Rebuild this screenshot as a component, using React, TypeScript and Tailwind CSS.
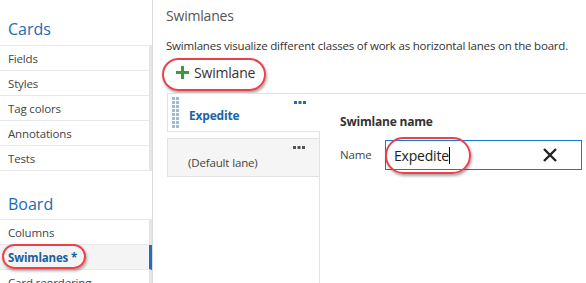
import React from "react";

const font = { fontFamily: '"Open Sans", "Noto Sans", sans-serif' };

function Row({ label, selected }: { label: string; selected?: boolean }) {
  return (
    <div
      className={
        "h-[25px] flex items-center pl-[8px] pt-[2px] border-b border-[#e8e8e8] border-r-[3px] text-[11.5px] tracking-[-0.15px] " +
        (selected
          ? "border-r-[#1f6fc0] bg-[#f4f4f4] font-bold text-[#1a5f9e]"
          : "border-r-[#e6e6e6] text-[#444]")
      }
    >
      {label}
    </div>
  );
}

function Dots() {
  const pts: [number, number][] = [];
  for (let r = 0; r < 8; r++) {
    pts.push([0, r * 4]);
    pts.push([4, r * 4]);
  }
  return (
    <svg width="8" height="31" viewBox="0 0 8 31" className="block">
      {pts.map(([x, y], i) => (
        <rect key={i} x={x} y={y} width="3" height="3" fill="#9bbdd9" />
      ))}
    </svg>
  );
}

function Ellipsis({ color }: { color: string }) {
  return (
    <svg width="12" height="4" viewBox="0 0 12 4" className="block">
      <rect x="0" y="0" width="3" height="3" fill={color} />
      <rect x="4.5" y="0" width="3" height="3" fill={color} />
      <rect x="9" y="0" width="3" height="3" fill={color} />
    </svg>
  );
}

export default function App() {
  return (
    <div className="w-[586px] h-[283px] flex overflow-hidden bg-white" style={font}>
      {/* Sidebar */}
      <div className="w-[153px] shrink-0 border-r border-[#dcdcdc] relative">
        <div className="h-[46px] flex items-end pb-[4px] pl-[8px] text-[16px] text-[#1b6bb3] border-b border-[#e8e8e8]">
          Cards
        </div>
        <Row label="Fields" />
        <Row label="Styles" />
        <Row label="Tag colors" />
        <Row label="Annotations" />
        <Row label="Tests" />
        <div className="h-[49px] flex items-end pb-[3px] pl-[8px] text-[16px] text-[#1b6bb3] border-b border-[#e8e8e8]">
          Board
        </div>
        <Row label="Columns" />
        <Row label="Swimlanes *" selected />
        <Row label="Card reordering" />
        <div className="absolute left-[2px] top-[244px] w-[84px] h-[25px] rounded-full border-2 border-[#e9424d] shadow-[1px_2px_3px_rgba(0,0,0,0.35)]" />
      </div>

      {/* Main */}
      <div className="flex-1 pl-[13px] relative">
        <div className="pt-[6px] text-[14px] text-[#555] leading-[20px] tracking-[-0.2px]">Swimlanes</div>
        <div className="mt-[12px] text-[11.5px] tracking-[-0.2px] text-[#333] leading-[16px] whitespace-nowrap">
          Swimlanes visualize different classes of work as horizontal lanes on the board.
        </div>
        <div className="mt-[4px] flex items-center h-[28px] pl-[10px] gap-[5px] text-[14px] tracking-[-0.2px] text-[#333]">
          <svg width="13" height="13" viewBox="0 0 13 13">
            <rect x="5" y="0" width="3" height="13" fill="#3a9a3c" />
            <rect x="0" y="5" width="13" height="3" fill="#3a9a3c" />
          </svg>
          <span>Swimlane</span>
        </div>
        <div className="absolute left-[9px] top-[58px] w-[104px] h-[33px] rounded-full border-2 border-[#e9424d] shadow-[1px_2px_3px_rgba(0,0,0,0.35)]" />

        <div className="mt-[7px] flex">
          {/* lane list */}
          <div className="w-[155px] shrink-0 pl-[2px] border-r border-[#e2e2e2] h-[200px] -ml-px">
            <div className="h-[39px] border border-r-0 border-[#e2e2e2] bg-white flex items-center relative -mr-px">
              <div className="pl-[4px]">
                <Dots />
              </div>
              <div className="pl-[9px] pt-[6px] text-[12px] tracking-[-0.2px] font-bold text-[#1c64a6]">Expedite</div>
              <div className="absolute right-[14px] top-[7px]">
                <Ellipsis color="#1f6fb5" />
              </div>
            </div>
            <div className="mt-[6px] h-[39px] border border-[#e2e2e2] bg-[#f5f5f5] relative flex items-center pt-[10px] pl-[20px] text-[11.5px] tracking-[-0.15px] text-[#444] mr-[-1px]">
              (Default lane)
              <div className="absolute right-[14px] top-[7px]">
                <Ellipsis color="#555" />
              </div>
            </div>
          </div>
          {/* detail */}
          <div className="flex-1 border-t border-[#e2e2e2] pl-[20px] pt-[20px]">
            <div className="text-[12px] font-bold tracking-[-0.2px] text-[#333] leading-[16px]">Swimlane name</div>
            <div className="mt-[10px] flex items-center">
              <div className="text-[11.5px] tracking-[-0.15px] text-[#444] w-[45px]">Name</div>
              <div className="relative w-[197px] h-[30px] border border-[#1b78d0] flex items-center pl-[8px] text-[14px] tracking-[-0.2px] text-[#222]">
                <span>Expedite</span>
                <span className="inline-block w-px h-[17px] bg-black" />
                <svg className="absolute right-[24px] top-[7px]" width="14" height="14" viewBox="0 0 14 14">
                  <path d="M1 1 L13 13 M13 1 L1 13" stroke="#222" strokeWidth="2.4" />
                </svg>
              </div>
            </div>
          </div>
        </div>
        <div className="absolute left-[232px] top-[137px] w-[86px] h-[37px] rounded-full border-2 border-[#e9424d] shadow-[1px_2px_3px_rgba(0,0,0,0.35)]" />
      </div>
    </div>
  );
}
